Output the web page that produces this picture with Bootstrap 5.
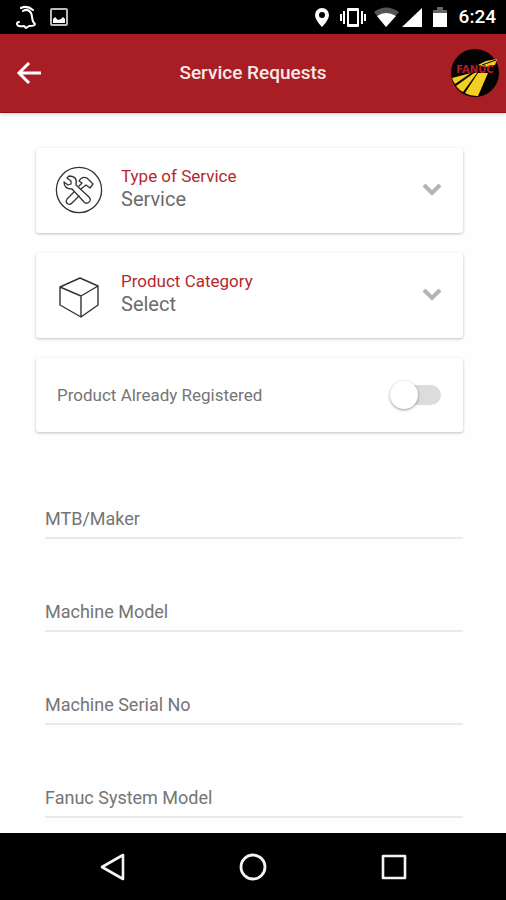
<!DOCTYPE html>
<html lang="en">
<head>
<meta charset="utf-8">
<meta name="viewport" content="width=device-width, initial-scale=1">
<title>Service Requests</title>
<link href="https://cdn.jsdelivr.net/npm/bootstrap@5.3.0/dist/css/bootstrap.min.css" rel="stylesheet">
<style>
body { font-family: Roboto, "Liberation Sans", sans-serif; color: #757575; background: #fefefe; }
svg { display: block; flex-shrink: 0; }
.status-bar { height: 34px; padding: 0 10px 0 15px; background: #000; color: #fff; }
.notices { gap: 12px; }
.clock { font-size: 19px; line-height: 24px; font-weight: 500; }
.app-bar { height: 79px; padding: 0 7px 0 16px; background: #a81e24; border-bottom: 1px solid #8c1217; box-shadow: 0 1px 4px rgba(0,0,0,.2); }
.app-title { font-size: 19px; line-height: 24px; font-weight: 500; color: #f8e9e9; }
.side-slot { width: 39px; }
.form-area { padding: 35px 43px 15px 36px; }
.stack { gap: 20px; }
.tile { border-radius: 3px; background: #fff; box-shadow: 0 1px 3px rgba(0,0,0,.25); }
.tile-select { height: 85px; padding: 0 21px 2px 19px; gap: 18px; }
.tile-switch { height: 74px; padding: 0 21px; }
.tile-text { padding-bottom: 3px; }
.tile-label { font-size: 17px; line-height: 22px; color: #b5282e; }
.tile-value { appearance: none; border: 0; padding: 0; background: transparent; font-size: 20px; line-height: 24px; color: #6c6c6c; }
.text-row { font-size: 17px; line-height: 22px; }
.slide { appearance: none; width: 52px; height: 32px; margin: 0; position: relative; cursor: pointer; }
.slide::before { content: ""; position: absolute; left: 12px; right: 1px; top: 6px; height: 20px; border-radius: 10px; background: #dcdcdc; }
.slide::after { content: ""; position: absolute; left: 0; top: 2px; width: 28px; height: 28px; border-radius: 50%; background: #fff; box-shadow: 0 1px 3px rgba(0,0,0,.4); }
.slide:checked::before { background: #dba0a3; }
.slide:checked::after { left: 23px; background: #a81e24; }
.fields { padding: 72px 0 0 9px; gap: 58px; }
.line-input { border: 0; border-bottom: 2px solid #eaeaea; padding: 0 0 5px; height: 35px; background: transparent; font-size: 18px; line-height: 28px; color: #555; }
.line-input::placeholder { color: #757575; opacity: 1; }
.system-nav { height: 67px; padding: 0 98px; background: #000; }
</style>
</head>
<body class="d-flex flex-column min-vh-100">
<div class="status-bar d-flex align-items-center justify-content-between">
  <div class="notices d-flex align-items-center">
    <svg width="22" height="26" viewBox="0 0 22 26" fill="none" stroke="#fff" stroke-width="2" stroke-linecap="round" stroke-linejoin="round" aria-hidden="true">
      <path d="M6 4Q12 1 18 6M8 7Q13 4 16 9C18 13 16 17 20 20Q20 22 14 22L11 24L9 22Q2 23 2 20Q2 18 4 18"/>
    </svg>
    <svg width="20" height="20" viewBox="0 0 20 20" aria-hidden="true">
      <rect x="2" y="2" width="16" height="16" rx="1" fill="none" stroke="#bbb" stroke-width="2"/>
      <path d="M4 16V12L6 10L9 13L12 12L14 10L16 12V16Z" fill="#fff"/>
    </svg>
  </div>
  <div class="d-flex align-items-center">
    <svg width="144" height="26" viewBox="0 0 144 26" fill="#fff" aria-hidden="true">
      <path fill-rule="evenodd" d="M7 4a7 7 0 0 1 7 7c0 5-7 12-7 12S0 16 0 11a7 7 0 0 1 7-7Zm0 4a3 3 0 1 0 0 6a3 3 0 0 0 0-6Z"/>
      <path fill-rule="evenodd" d="M33 4h10q1 0 1 1v17q0 1-1 1H33q-1 0-1-1V5q0-1 1-1Zm1 3v13h8V7ZM28 7h2v13h-2ZM25 10h2v7h-2ZM46 7h2v13h-2ZM49 10h2v7h-2Z"/>
      <path fill="#555" d="M59 8Q71-1 84 8L71 23Z"/>
      <path d="M62 12Q71 6 81 12L71 23Z"/>
      <path d="M107 4V23H87Z"/>
      <path fill="#666" d="M122 3h6v3h4v4h-14V6h4Z"/>
      <path d="M118 9h14v14h-14Z"/>
    </svg>
    <span class="clock">6:24</span>
  </div>
</div>
<header class="app-bar d-flex align-items-center justify-content-between">
  <div class="side-slot">
    <button type="button" class="btn p-0 border-0" aria-label="Back">
      <svg width="26" height="26" viewBox="0 0 26 26" fill="none" stroke="#fff" stroke-width="3" aria-hidden="true"><path d="M25 13H3M13 3L3 13L13 23"/></svg>
    </button>
  </div>
  <h1 class="app-title m-0">Service Requests</h1>
  <svg width="48" height="48" viewBox="0 0 48 48" role="img" aria-label="Fanuc">
    <circle cx="24" cy="24" r="24" fill="#050203"/>
    <g fill="#f3cf22">
      <path d="M1 29L20 24L4 35Q2 32 1 29Z"/>
      <path d="M5 37L23 24L26 24L12 43Q8 41 5 37Z"/>
      <path d="M14 44L27 24H37L27 47Q19 47 14 44Z"/>
      <path d="M27 16L35 12L46 10L44 16L34 18Z"/>
    </g>
    <path d="M31 16L45 11" stroke="#050203"/>
    <text x="24" y="24" text-anchor="middle" font-family="DejaVu Sans, sans-serif" font-size="10" font-weight="700" fill="#b81c24">FANUC</text>
  </svg>
</header>
<main class="form-area flex-grow-1">
  <form>
    <div class="stack d-flex flex-column">
      <div class="tile tile-select d-flex align-items-center">
        <svg width="48" height="48" viewBox="0 0 48 48" fill="none" stroke="#333" stroke-width="1.3" stroke-linejoin="round" stroke-linecap="round" aria-hidden="true">
          <circle cx="24" cy="24" r="22.600"/>
          <path d="M12 12L16 15V18L13 19L9 16Q9 23 17 23L30 37Q33 38 35 35Q36 33 34 31L21 19Q23 10 14 10Z"/>
          <path d="M24 15Q27 10 32 12L38 18L35 22L31 19L26 23M24 15L27 17L24 20M19 26L12 33Q10 36 13 38Q15 39 17 37L24 30"/>
        </svg>
        <div class="tile-text d-flex flex-column flex-grow-1">
          <label class="tile-label" for="serviceType">Type of Service</label>
          <select class="tile-value w-100" id="serviceType"><option>Service</option></select>
        </div>
        <svg width="20" height="14" viewBox="0 0 20 14" fill="none" stroke="#b4b4b4" stroke-width="4" aria-hidden="true"><path d="M2 2L10 10L18 2"/></svg>
      </div>
      <div class="tile tile-select d-flex align-items-center">
        <svg width="48" height="48" viewBox="0 0 48 48" fill="none" stroke="#333" stroke-width="1.4" stroke-linejoin="round" aria-hidden="true">
          <path d="M25 7L43 15V34L26 46L5 34V16ZM5 16L26 25L43 15M26 25V46"/>
        </svg>
        <div class="tile-text d-flex flex-column flex-grow-1">
          <label class="tile-label" for="category">Product Category</label>
          <select class="tile-value w-100" id="category"><option>Select</option></select>
        </div>
        <svg width="20" height="14" viewBox="0 0 20 14" fill="none" stroke="#b4b4b4" stroke-width="4" aria-hidden="true"><path d="M2 2L10 10L18 2"/></svg>
      </div>
      <div class="tile tile-switch d-flex align-items-center justify-content-between">
        <label class="text-row" for="registered">Product Already Registered</label>
        <input class="slide" type="checkbox" role="switch" id="registered">
      </div>
    </div>
    <div class="fields d-flex flex-column">
      <input class="line-input w-100" id="maker" type="text" placeholder="MTB/Maker" aria-label="MTB/Maker">
      <input class="line-input w-100" id="model" type="text" placeholder="Machine Model" aria-label="Machine Model">
      <input class="line-input w-100" id="serial" type="text" placeholder="Machine Serial No" aria-label="Machine Serial No">
      <input class="line-input w-100" id="system" type="text" placeholder="Fanuc System Model" aria-label="Fanuc System Model">
    </div>
  </form>
</main>
<nav class="system-nav d-flex align-items-center justify-content-between" aria-label="System">
  <button type="button" class="btn p-0 border-0" aria-label="Back"><svg width="30" height="30" viewBox="0 0 30 30" fill="none" stroke="#f4f4f4" stroke-width="2.6" stroke-linejoin="round" aria-hidden="true"><path d="M25 3V27L4 15Z"/></svg></button>
  <button type="button" class="btn p-0 border-0" aria-label="Home"><svg width="30" height="30" viewBox="0 0 30 30" fill="none" stroke="#f4f4f4" stroke-width="2.8" aria-hidden="true"><circle cx="15" cy="15" r="12"/></svg></button>
  <button type="button" class="btn p-0 border-0" aria-label="Recent apps"><svg width="30" height="30" viewBox="0 0 30 30" fill="none" stroke="#f4f4f4" stroke-width="2.6" stroke-linejoin="round" aria-hidden="true"><rect x="5" y="4" width="22" height="22"/></svg></button>
</nav>
<script src="https://cdn.jsdelivr.net/npm/bootstrap@5.3.0/dist/js/bootstrap.bundle.min.js"></script>
</body>
</html>
